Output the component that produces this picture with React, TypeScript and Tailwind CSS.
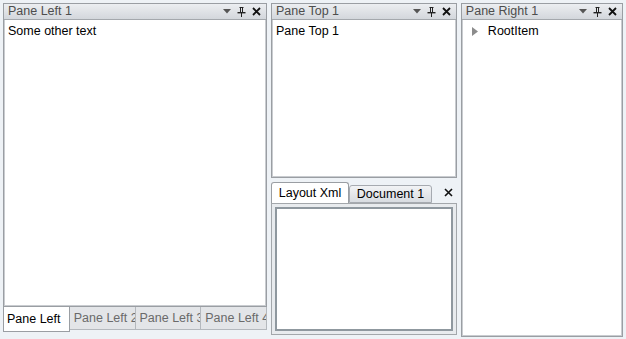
import React from "react";

const font = { fontFamily: "'Liberation Sans', Arial, sans-serif" };

function HeaderIcons() {
  return (
    <div className="flex items-center gap-[6px] pr-[5px]">
      <svg width="8" height="5" viewBox="0 0 8 5">
        <polygon points="0,0 8,0 4,4.5" fill="#555" />
      </svg>
      <svg width="9" height="10" viewBox="0 0 9 10">
        <rect x="2.5" y="0" width="4" height="1" fill="#222" />
        <rect x="3" y="0" width="1" height="6" fill="#222" />
        <rect x="5" y="0" width="1" height="6" fill="#222" />
        <rect x="0.5" y="5" width="8" height="1.4" fill="#222" />
        <rect x="4" y="6" width="1" height="4" fill="#222" />
      </svg>
      <svg width="9" height="9" viewBox="0 0 9 9">
        <path d="M1 1 L8 8 M8 1 L1 8" stroke="#111" strokeWidth="1.8" />
      </svg>
    </div>
  );
}

function Pane({ title, children, className }: { title: string; children?: React.ReactNode; className?: string }) {
  return (
    <div className={`flex flex-col border border-[#9a9ea3] bg-white ${className ?? ""}`}>
      <div className="flex h-[16px] shrink-0 items-center justify-between border-b border-[#a4a8ad] bg-gradient-to-b from-[#eceef1] to-[#d3d7dc]">
        <span className="pl-[4px] text-[12.5px] leading-none text-[#4d4d4d]">{title}</span>
        <HeaderIcons />
      </div>
      <div className="flex-1 border-x border-b border-[#c9ccd0] border-t-0 px-[3px] pt-[2px] text-[12.5px] text-black">
        {children}
      </div>
    </div>
  );
}

export default function App() {
  const tabs = ["Pane Left 2", "Pane Left 3", "Pane Left 4"];
  return (
    <div className="flex h-[339px] w-[626px] gap-[4px] bg-[#eef2f6] p-[3px] pb-0" style={font}>
      {/* left column */}
      <div className="flex w-[264px] flex-col">
        <Pane title="Pane Left 1" className="h-[304px]">
          Some other text
        </Pane>
        <div className="flex h-[26px]">
          <div className="flex h-[25px] w-[67px] items-center border border-t-0 border-[#9a9ea3] bg-white pl-[3px] text-[12.5px] text-black">
            Pane Left
          </div>
          {tabs.map((t) => (
            <div
              key={t}
              className="flex h-[23px] w-[66px] items-center overflow-hidden whitespace-nowrap border-b border-r border-[#b4b8bd] bg-[#e3e5e8] pl-[4px] text-[12.5px] text-[#6a6a6a]"
            >
              {t}
            </div>
          ))}
        </div>
      </div>

      {/* middle column */}
      <div className="flex w-[188px] flex-col">
        <Pane title="Pane Top 1" className="h-[175px]">
          Pane Top 1
        </Pane>
        <div className="mt-[4px] flex h-[21px] items-end">
          <div className="flex h-[21px] w-[78px] items-center justify-center rounded-t-[3px] border border-b-0 border-[#9a9ea3] bg-white text-[12.5px] text-black">
            Layout Xml
          </div>
          <div className="flex h-[18px] w-[83px] items-center justify-center rounded-t-[3px] border border-[#a6aab0] bg-gradient-to-b from-[#f2f3f5] to-[#d8dce1] text-[12.5px] text-black">
            Document 1
          </div>
          <div className="flex flex-1 items-center justify-end self-center pr-[4px]">
            <svg width="9" height="9" viewBox="0 0 9 9">
              <path d="M1 1 L8 8 M8 1 L1 8" stroke="#111" strokeWidth="1.6" />
            </svg>
          </div>
        </div>
        <div className="flex h-[132px] border border-[#a3a7ab] bg-[#e8ebee] p-[3px]">
          <div className="flex-1 border-2 border-[#8f989f] bg-white" />
        </div>
      </div>

      {/* right column */}
      <div className="w-[164px]">
        <Pane title="Pane Right 1" className="h-[334px]">
          <div className="flex items-center pl-[6px]">
            <svg width="7" height="9" viewBox="0 0 7 9">
              <polygon points="0,0 6,4.5 0,9" fill="#8c8c8c" />
            </svg>
            <span className="pl-[9px]">RootItem</span>
          </div>
        </Pane>
      </div>
    </div>
  );
}
